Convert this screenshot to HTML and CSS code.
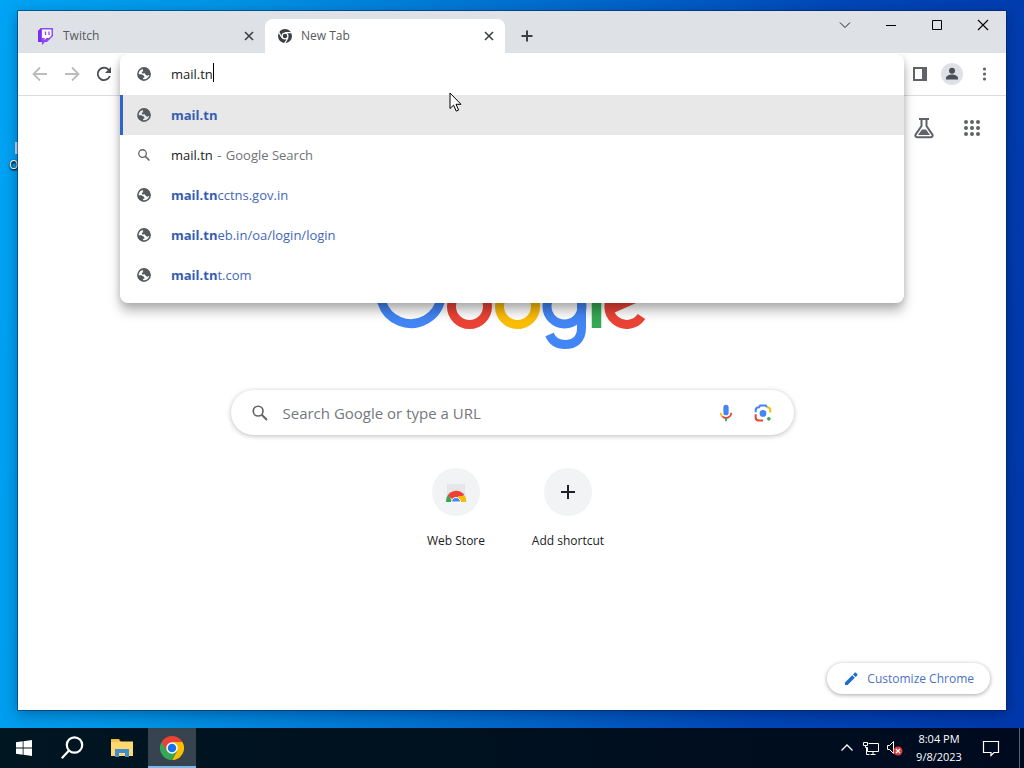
FILE: index.html
```html
<!DOCTYPE html>
<html lang="en">
<head>
<meta charset="utf-8">
<title>New Tab</title>
<link rel="stylesheet" href="styles.css">
</head>
<body>
<svg class="defs" aria-hidden="true">
  <symbol id="globe" viewBox="0 0 24 24">
    <circle cx="12" cy="12" r="10.500" fill="none" stroke="#56595d" stroke-width="2.600"/>
    <path fill="#56595d" d="M11 1.500L9.500 4.500 11 7 8 8.500 9 11l4.500-.5 1.500 3 3 1.500 2-1.500h3C23 6 18 1 11 1.500z"/>
    <path fill="#56595d" d="M1.500 12.500h6l4.500 2.500 1 2.500-2.500 1.500-.5 4C5 21.500 1.500 18 1.500 12.500z"/>
  </symbol>
  <symbol id="lens" viewBox="0 0 24 24">
    <circle cx="9.500" cy="9.500" r="6.500" fill="none" stroke="#5f6368" stroke-width="2.200"/>
    <path d="M14.300 14.300l7 7" stroke="#5f6368" stroke-width="2.600"/>
  </symbol>
  <symbol id="cross" viewBox="0 0 16 16">
    <path d="M4 4l8 8M12 4l-8 8" stroke="#3c4043" stroke-width="1.600"/>
  </symbol>
</svg>

<div class="desktop">
  <div class="shortcut-edge" aria-hidden="true"><i></i><span>O</span></div>

  <main class="window">
    <header class="tabstrip">
      <div class="tabs">
        <div class="tab">
          <svg width="16" height="18" viewBox="0 0 16 18"><path fill="#9146ff" d="M4 1L1 4v11h4v3l3-3h2l6-6V1z"/><path fill="#7a30ea" d="M1 4l3-3v11l2 3H1z"/><path fill="#fff" d="M5 2.500h9.500v6L12 11H9.500L7.500 13v-2H5z"/><path d="M8.500 4.500v3.500M12 4.500v3.500" stroke="#9146ff" stroke-width="1.300"/></svg>
          <span class="tab-title">Twitch</span>
          <button class="tab-close" aria-label="Close Twitch"><svg width="16" height="16"><use href="#cross"/></svg></button>
        </div>
        <div class="tab active">
          <svg width="16" height="16" viewBox="0 0 16 16"><circle cx="8" cy="8" r="7" fill="#3c4043"/><circle cx="8" cy="8" r="2.900" fill="#3c4043" stroke="#fff" stroke-width="1.300"/><path d="M8 4.600h6.800M5 9.700L1.700 4M11 9.700L7.600 15.500" stroke="#fff" stroke-width="1.200"/></svg>
          <span class="tab-title">New Tab</span>
          <button class="tab-close" aria-label="Close New Tab"><svg width="16" height="16"><use href="#cross"/></svg></button>
        </div>
        <button class="new-tab" aria-label="New tab"><svg width="16" height="16" viewBox="0 0 16 16"><path d="M8 2.500v11M2.500 8h11" stroke="#3c4043" stroke-width="2"/></svg></button>
      </div>
      <div class="controls">
        <button aria-label="Search tabs"><svg width="12" height="12" viewBox="0 0 12 12"><path d="M1 3.500l5 5 5-5" fill="none" stroke="#222"/></svg></button>
        <button aria-label="Minimize"><svg width="12" height="12" viewBox="0 0 12 12"><path d="M1 6.500h10" stroke="#000"/></svg></button>
        <button aria-label="Maximize"><svg width="12" height="12" viewBox="0 0 12 12"><path d="M1.500 1.500h9v9h-9z" fill="none" stroke="#000"/></svg></button>
        <button aria-label="Close"><svg width="12" height="12" viewBox="0 0 12 12"><path d="M1 1l10 10M11 1L1 11" stroke="#000" stroke-width="1.100"/></svg></button>
      </div>
    </header>

    <div class="toolbar">
      <nav class="tool-group">
        <button aria-label="Back"><svg width="18" height="18" viewBox="0 0 18 18"><path d="M16 9H3M9 2.500L2.500 9 9 15.500" fill="none" stroke="#babcbe" stroke-width="1.800"/></svg></button>
        <button aria-label="Forward"><svg width="18" height="18" viewBox="0 0 18 18"><path d="M2 9h13M9 2.500L15.500 9 9 15.500" fill="none" stroke="#babcbe" stroke-width="1.800"/></svg></button>
        <button aria-label="Reload"><svg width="18" height="18" viewBox="0 0 18 18"><path d="M14.800 11A6.200 6.200 0 1 1 13.500 4.700L15 6.300" fill="none" stroke="#4a4d51" stroke-width="1.800"/><path d="M16 2v6h-6z" fill="#4a4d51"/></svg></button>
      </nav>
      <div class="tool-group">
        <button aria-label="Side panel"><svg width="16" height="16" viewBox="0 0 16 16"><path d="M2 2h12v12H2z" fill="none" stroke="#5f6368" stroke-width="2"/><path d="M10 1h5v14h-5z" fill="#5f6368"/></svg></button>
        <button aria-label="Profile" class="profile"><svg width="22" height="22" viewBox="0 0 22 22"><circle cx="11" cy="11" r="11" fill="#dee1e6"/><circle cx="11" cy="7.800" r="3" fill="#4b5057"/><path d="M5 16.500v-1.300c0-2.400 3.500-3.600 6-3.600s6 1.200 6 3.600v1.300z" fill="#4b5057"/></svg></button>
        <button aria-label="Menu"><svg width="16" height="16" viewBox="0 0 16 16" fill="#5f6368"><circle cx="8.500" cy="3" r="1.600"/><circle cx="8.500" cy="8" r="1.600"/><circle cx="8.500" cy="13" r="1.600"/></svg></button>
      </div>

      <div class="omnibox">
        <div class="omni-entry">
          <svg width="14" height="14"><use href="#globe"/></svg>
          <input type="text" value="mail.tn" aria-label="Address and search bar" spellcheck="false">
          <i class="caret"></i>
        </div>
        <ul class="suggestions">
          <li><a class="selected" href="#"><svg width="14" height="14"><use href="#globe"/></svg><span><b>mail.tn</b></span></a></li>
          <li><a class="query" href="#"><svg width="14" height="14"><use href="#lens"/></svg><span class="query-text">mail.tn <em>-</em> <em>Google Search</em></span></a></li>
          <li><a href="#"><svg width="14" height="14"><use href="#globe"/></svg><span><b>mail.tn</b>cctns.gov.in</span></a></li>
          <li><a href="#"><svg width="14" height="14"><use href="#globe"/></svg><span><b>mail.tn</b>eb.in/oa/login/login</span></a></li>
          <li><a href="#"><svg width="14" height="14"><use href="#globe"/></svg><span><b>mail.tn</b>t.com</span></a></li>
        </ul>
      </div>
    </div>

    <section class="page">
      <nav class="page-nav">
        <button aria-label="Search labs"><svg width="24" height="24" viewBox="0 0 24 24"><path d="M7 3h10M9.500 3v7L3.600 18.600A1.700 1.700 0 0 0 5 21.200h14a1.700 1.700 0 0 0 1.400-2.600L14.500 10V3" fill="none" stroke="#5f6368" stroke-width="2"/><path d="M10 13.500h4l4 5.500H6z" fill="#5f6368"/></svg></button>
        <button aria-label="Google apps"><svg width="24" height="24" viewBox="0 0 24 24" fill="#5f6368"><circle cx="6" cy="6" r="2"/><circle cx="12" cy="6" r="2"/><circle cx="18" cy="6" r="2"/><circle cx="6" cy="12" r="2"/><circle cx="12" cy="12" r="2"/><circle cx="18" cy="12" r="2"/><circle cx="6" cy="18" r="2"/><circle cx="12" cy="18" r="2"/><circle cx="18" cy="18" r="2"/></svg></button>
      </nav>

      <svg class="logo" role="img" aria-label="Google" width="272" height="92" viewBox="376 257 272 92" fill="none" stroke-width="9">
        <path stroke="#4285f4" d="M433 272A30.500 30.500 0 1 0 441 298H411"/>
        <circle stroke="#ea4335" cx="469.500" cy="306.500" r="18"/>
        <circle stroke="#fbbc05" cx="517.500" cy="306.500" r="18"/>
        <circle stroke="#4285f4" cx="564.500" cy="306.500" r="17.500"/>
        <path stroke="#4285f4" d="M581.500 285V328C581.500 340 574 344.500 565 344.500C557 344.500 552 340.500 549.500 334.500"/>
        <path stroke="#34a853" stroke-width="9.500" d="M596.500 259V328"/>
        <path stroke="#ea4335" d="M641.500 316.500A17.800 17.800 0 1 1 641 296L610 309.500"/>
      </svg>

      <form class="search">
        <svg width="18" height="18"><use href="#lens"/></svg>
        <input type="text" placeholder="Search Google or type a URL" aria-label="Search Google or type a URL">
        <button type="button" aria-label="Search by voice"><svg width="18" height="18" viewBox="0 0 24 24"><path fill="#4285f4" d="M12 1a3.500 3.500 0 0 0-3.500 3.500v7a3.500 3.500 0 0 0 7 0v-7A3.500 3.500 0 0 0 12 1z"/><path fill="none" stroke="#fbbc04" stroke-width="2.400" d="M5 11.500c0 2 .8 3.800 2 5"/><path fill="none" stroke="#ea4335" stroke-width="2.400" d="M7 16.500c3 2.600 7 2.600 10 0 1.200-1.200 2-3 2-5"/><path stroke="#34a853" stroke-width="2.400" d="M12 18.500V23"/></svg></button>
        <button type="button" aria-label="Search by image"><svg width="20" height="20" viewBox="0 0 24 24" fill="none" stroke-width="2.400"><path stroke="#4285f4" d="M3.200 11V9c0-2.500 1.300-4 4-4l1.500-2h6.600L17 5"/><path stroke="#fbbc04" d="M16.500 5c2.800 0 4.300 1.500 4.300 4v2.500"/><path stroke="#ea4335" d="M3.200 13.500V17c0 2.500 1.500 4 4 4H12"/><circle cx="12" cy="12.500" r="4" fill="#4285f4"/><circle cx="19" cy="19" r="2.200" fill="#34a853"/></svg></button>
      </form>

      <div class="tiles">
        <a class="tile" href="#">
          <span class="tile-icon"><svg width="24" height="24" viewBox="0 0 24 24"><path fill="#e4e6e9" d="M3 4h18v8l2 10H1L3 12z"/><path fill="#34a853" d="M2 22a10 10 0 0 1 2-7l5 7z"/><path fill="#ea4335" d="M3.500 16a10 10 0 0 1 17-1l-7 3-5 1z"/><path fill="#fbbc04" d="M14 16h7a10 10 0 0 1 1 6h-7z"/><path fill="#4285f4" stroke="#fff" stroke-width="1" d="M7.500 22a4.500 4.500 0 0 1 9 0z"/></svg></span>
          <span>Web Store</span>
        </a>
        <button class="tile">
          <span class="tile-icon"><svg width="20" height="20" viewBox="0 0 20 20"><path d="M10 3v14M3 10h14" stroke="#202124" stroke-width="2"/></svg></span>
          <span>Add shortcut</span>
        </button>
      </div>

      <button class="customize"><svg width="16" height="16" viewBox="0 0 16 16" fill="#1a6ed0"><path d="M2 11.400V14h2.600l7.200-7.200-2.600-2.600zM10 3.400L11.600 1.800c.4-.4 1-.4 1.300 0l1.300 1.300c.4.4.4 1 0 1.300L12.600 6z"/></svg>Customize Chrome</button>
    </section>
  </main>

  <svg class="pointer" width="14" height="21" viewBox="0 0 14 21" aria-hidden="true"><path d="M1 1v15.500l3.600-3.400 2.600 6 2.400-1-2.600-5.800h5z" fill="#fff" stroke="#000"/></svg>

  <footer class="taskbar">
    <nav class="launchers">
      <button aria-label="Start"><svg width="16" height="16" viewBox="0 0 16 16" fill="#fff"><path d="M0 2.200l6.700-.9v6.300H0zM7.500 1.200L16 0v7.600H7.500zM0 8.400h6.700v6.300L0 13.800zM7.500 8.400H16V16l-8.500-1.200z"/></svg></button>
      <button aria-label="Search"><svg width="24" height="24" viewBox="0 0 24 24" fill="none" stroke="#fff" stroke-width="2.200"><circle cx="14.500" cy="9" r="7.700"/><path d="M9 14.500L1.800 22.200"/></svg></button>
    </nav>
    <nav class="apps">
      <button aria-label="File Explorer"><svg width="24" height="20" viewBox="0 0 24 20"><path fill="#e0a92f" d="M1 1h8l2 3v3H1z"/><path fill="#ffd970" d="M1 3.500h22V18H1z"/><path fill="#f6c64d" d="M1 1.500h8v2H1z"/><path fill="#3f8fce" d="M5 11h14v8h-4v-4H9v4H5z"/></svg></button>
      <button aria-label="Google Chrome" class="running"><svg width="24" height="24" viewBox="0 0 24 24"><path fill="#ea4335" d="M12 12L1.600 6a12 12 0 0 1 20.800 0z"/><path fill="#34a853" d="M12 12v12A12 12 0 0 1 1.600 6z"/><path fill="#fbbc04" d="M12 12V6h10.400A12 12 0 0 1 12 24l5.200-9z"/><path fill="#34a853" d="M1.600 6l5.200 9L12 24l5.200-9z"/><path fill="#ea4335" d="M12 6H1.600l5.200 9z"/><circle cx="12" cy="12" r="5" fill="#1a73e8" stroke="#fff" stroke-width="1.500"/></svg></button>
    </nav>
    <div class="tray">
      <button aria-label="Show hidden icons"><svg width="14" height="14" viewBox="0 0 14 14"><path d="M1.500 9.500L7 4l5.500 5.500" fill="none" stroke="#fff" stroke-width="1.300"/></svg></button>
      <button aria-label="Network"><svg width="18" height="16" viewBox="0 0 18 16" fill="none" stroke="#fff"><path d="M6.500 3.500h10v8h-11v-4M8.500 14.500h5M11 11.500v3M4.500 7v7.500h3"/><path d="M1.500 2.500h4v3h-4zM3.500 5.500v2h2"/></svg></button>
      <button aria-label="Volume, muted"><svg width="18" height="16" viewBox="0 0 18 16"><path d="M1.500 5.500h2l4-4v12l-4-4h-2z" fill="none" stroke="#fff"/><circle cx="12" cy="11" r="4.500" fill="#d93a3a"/><path d="M10 9l4 4M14 9l-4 4" stroke="#fff" stroke-width="1.200"/></svg></button>
      <time class="clock" datetime="2023-09-08T20:04"><span>8:04 PM</span><span>9/8/2023</span></time>
      <button class="notices" aria-label="Notifications"><svg width="18" height="18" viewBox="0 0 18 18"><path d="M1.500 2.500h15v11H12l-3 3v-3H1.500z" fill="none" stroke="#fff" stroke-width="1.200"/></svg></button>
      <button class="peek" aria-label="Show desktop"></button>
    </div>
  </footer>
</div>
</body>
</html>
```

FILE: styles.css
```css
* { box-sizing: border-box; }

body {
  margin: 0;
  font-family: "Open Sans", "Noto Sans", sans-serif;
  font-size: 13px;
  line-height: 20px;
  color: #202124;
}

button {
  display: flex;
  align-items: center;
  justify-content: center;
  padding: 0;
  border: 0;
  background: none;
  color: inherit;
  font: inherit;
}

a { color: inherit; text-decoration: none; }
svg { flex: none; display: block; }
input { border: 0; padding: 0; outline: 0; background: none; font: inherit; color: inherit; }
.defs { position: absolute; width: 0; height: 0; }

.desktop {
  position: relative;
  display: flex;
  flex-direction: column;
  min-height: 100vh;
  background: linear-gradient(97deg, #00a4f5 0%, #0095e6 20%, #0069cc 52%, #0047b8 75%, #0037ab 100%);
}

.shortcut-edge {
  position: absolute;
  top: 142px;
  left: 9px;
  display: flex;
  flex-direction: column;
  color: #fff;
  text-shadow: 0 1px 2px #000, 1px 1px 2px #000;
  font-size: 12px;
}
.shortcut-edge i { width: 4px; height: 12px; margin-left: 6px; background: #b8def5; }
.shortcut-edge span { line-height: 22px; }

.window {
  position: relative;
  flex: 1;
  display: flex;
  flex-direction: column;
  margin: 11px 18px 18px;
  background: #fff;
  box-shadow: 0 0 0 1px rgba(0, 30, 80, .5), 0 4px 14px rgba(0, 0, 40, .35);
}

.tabstrip {
  display: flex;
  justify-content: space-between;
  height: 42px;
  background: #dee1e6;
}
.tabs { display: flex; align-items: flex-end; flex: 1; min-width: 0; padding-left: 7px; }
.tab {
  display: flex;
  align-items: center;
  gap: 10px;
  flex: 0 1 240px;
  height: 34px;
  padding: 0 8px 0 12px;
  color: #55595e;
  font-size: 12px;
}
.tab.active { gap: 8px; background: #fff; border-radius: 8px 8px 0 0; }
.tab-title { flex: 1; }
.tab-close { width: 16px; height: 16px; }
.new-tab { width: 28px; height: 34px; margin-left: 8px; }
.controls { display: flex; }
.controls button { width: 46px; height: 28px; }

.toolbar {
  position: relative;
  z-index: 1;
  display: flex;
  align-items: center;
  justify-content: space-between;
  height: 43px;
  padding: 0 6px;
  background: #fff;
  border-bottom: 1px solid #dadce0;
}
.tool-group { display: flex; }
.tool-group button { width: 32px; height: 32px; }

.omnibox {
  position: absolute;
  top: 1px;
  left: 102px;
  right: 102px;
  padding-bottom: 8px;
  background: #fff;
  border-radius: 8px;
  box-shadow: 0 8px 12px rgba(0, 0, 0, .28), 0 1px 6px rgba(0, 0, 0, .12);
  clip-path: inset(0 -20px -24px -20px);
}
.omni-entry, .suggestions a {
  display: flex;
  align-items: center;
  gap: 20px;
  height: 40px;
  padding: 0 17px;
}
.omni-entry { position: relative; margin-bottom: 1px; }
.omni-entry input { flex: 1; min-width: 0; }
.caret { position: absolute; top: 9px; left: 93px; width: 1px; height: 19px; background: #000; }
.suggestions { margin: 0; padding: 0; list-style: none; color: #4467b8; }
.suggestions b { color: #365cb5; }
.suggestions .selected { background: #e8e8e8; box-shadow: inset 3px 0 #2f66c4; }
.suggestions .query { color: #202124; }
.suggestions em { margin-left: 1px; font-style: normal; color: #6f7378; }

.page {
  flex: 1;
  display: flex;
  flex-direction: column;
  align-items: center;
}
.page-nav { display: flex; gap: 8px; align-self: flex-end; padding: 12px 14px 0; }
.page-nav button { width: 40px; height: 40px; }
.logo { margin-top: 109px; }

.search {
  display: flex;
  align-items: center;
  width: 100%;
  max-width: 563px;
  height: 45px;
  margin-top: 41px;
  padding: 0 12px 0 20px;
  border-radius: 23px;
  background: #fff;
  box-shadow: 0 1px 5px rgba(32, 33, 36, .3);
}
.search input { flex: 1; min-width: 0; margin-left: 14px; font-size: 15px; line-height: 24px; }
.search input::placeholder { color: #74787d; opacity: 1; }
.search button { width: 37px; height: 40px; }

.tiles { display: flex; margin-top: 33px; }
.tile {
  display: flex;
  flex-direction: column;
  justify-content: flex-start;
  align-items: center;
  gap: 15px;
  width: 112px;
  font-size: 12px;
}
.tile-icon {
  display: flex;
  align-items: center;
  justify-content: center;
  width: 48px;
  height: 48px;
  border-radius: 50%;
  background: #f1f3f4;
}

.customize {
  align-self: flex-end;
  gap: 8px;
  height: 31px;
  margin: auto 16px 16px;
  padding: 0 16px;
  border-radius: 16px;
  background: #fff;
  color: #4a73c8;
  font-size: 12px;
  box-shadow: 0 1px 4px rgba(32, 33, 36, .4);
}

.pointer { position: absolute; top: 92px; left: 449px; z-index: 2; }

.taskbar {
  display: flex;
  height: 40px;
  background: linear-gradient(90deg, #001621, #00101f 50%, #000a1f);
  color: #fff;
}
.launchers, .apps, .tray { display: flex; }
.launchers button, .apps button { width: 48px; height: 40px; }
.apps { gap: 2px; margin-left: 2px; }
.apps .running { background: #37444f; box-shadow: inset 0 -2px #76b9ed; }
.tray { margin-left: auto; }
.tray button { width: 24px; }
.clock {
  display: flex;
  flex-direction: column;
  justify-content: center;
  width: 64px;
  text-align: center;
  font-size: 11px;
  line-height: 18px;
}
.tray .notices { width: 40px; }
.tray .peek { width: 5px; margin-left: 8px; border-left: 1px solid #5c6573; }
```
